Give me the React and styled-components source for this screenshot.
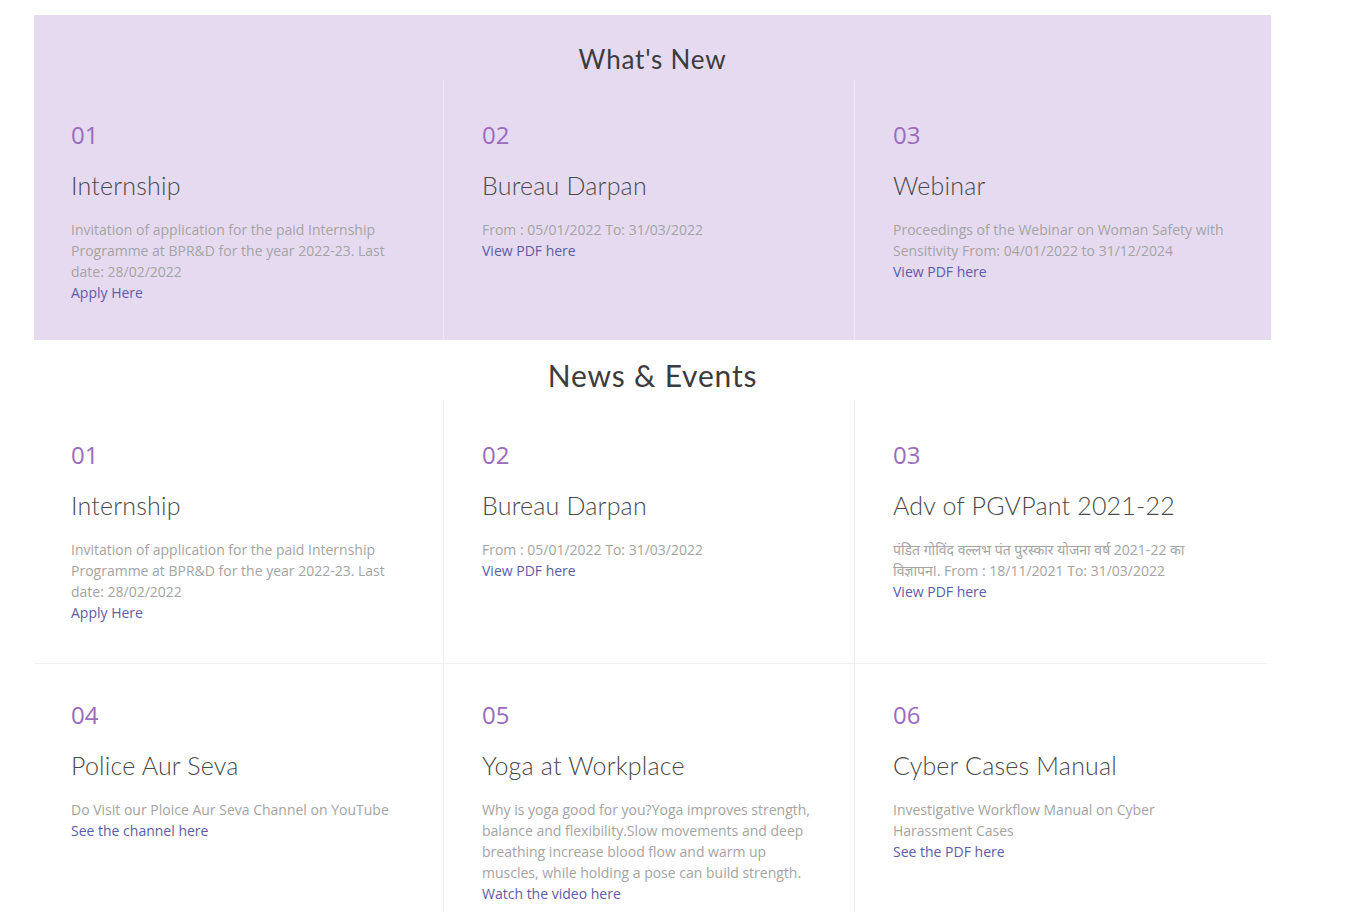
import React from "react";
import styled, { createGlobalStyle } from "styled-components";

const whatsNew = [
  {
    no: "01",
    title: "Internship",
    text: "Invitation of application for the paid Internship Programme at BPR&D for the year 2022-23. Last date: 28/02/2022",
    link: "Apply Here",
  },
  {
    no: "02",
    title: "Bureau Darpan",
    text: "From : 05/01/2022 To: 31/03/2022",
    link: "View PDF here",
  },
  {
    no: "03",
    title: "Webinar",
    text: "Proceedings of the Webinar on Woman Safety with Sensitivity From: 04/01/2022 to 31/12/2024",
    link: "View PDF here",
  },
];

const news = [
  whatsNew[0],
  whatsNew[1],
  {
    no: "03",
    title: "Adv of PGVPant 2021-22",
    text: "पंडित गोविंद वल्लभ पंत पुरस्कार योजना वर्ष 2021-22 का विज्ञापनI. From : 18/11/2021 To: 31/03/2022",
    link: "View PDF here",
  },
  {
    no: "04",
    title: "Police Aur Seva",
    text: "Do Visit our Ploice Aur Seva Channel on YouTube",
    link: "See the channel here",
  },
  {
    no: "05",
    title: "Yoga at Workplace",
    text: "Why is yoga good for you?Yoga improves strength, balance and flexibility.Slow movements and deep breathing increase blood flow and warm up muscles, while holding a pose can build strength.",
    link: "Watch the video here",
  },
  {
    no: "06",
    title: "Cyber Cases Manual",
    text: "Investigative Workflow Manual on Cyber Harassment Cases",
    link: "See the PDF here",
  },
];

const Global = createGlobalStyle`
  body {
    margin: 0;
    background: #fff;
    font-family: "Open Sans", "Noto Sans", sans-serif;
  }
`;

const Page = styled.div`
  width: 1237px;
  margin-left: 34px;
  padding-top: 15px;
`;

const Section = styled.section`
  background: ${(p) => (p.$tinted ? "#e6daf1" : "transparent")};
  padding-top: ${(p) => (p.$tinted ? "24px" : "15px")};
`;

const Heading = styled.h2`
  margin: 0 0 ${(p) => (p.$big ? "5px" : "1px")};
  text-align: center;
  font-family: Lato, "Noto Sans", sans-serif;
  font-weight: 400;
  font-size: ${(p) => (p.$big ? "30px" : "26px")};
  line-height: 40px;
  letter-spacing: 0.8px;
  color: #3c3c3c;
`;

const Grid = styled.div`
  display: grid;
  grid-template-columns: 409px 411px 1fr;
`;

const Card = styled.div`
  padding: ${(p) => (p.$rowTop ? "36px" : "40px")} 38px
    ${(p) => (p.$tinted ? "37px" : "40px")};
  padding-left: ${(p) => (p.$first ? "37px" : "38px")};
  border-left: ${(p) =>
    p.$first ? "none" : `1px solid ${p.$tinted ? "#efe8f6" : "#eeeeee"}`};
  border-top: ${(p) => (p.$rowTop ? "1px solid #eeeeee" : "none")};
  margin-right: ${(p) => (p.$last && !p.$tinted ? "4px" : "0")};
`;

const Num = styled.div`
  font-size: 24px;
  line-height: 30px;
  color: #9b6bbd;
`;

const Title = styled.h3`
  margin: 19px 0 18px;
  font-family: Lato, "Noto Sans", sans-serif;
  font-weight: 300;
  font-size: 25px;
  line-height: 32px;
  letter-spacing: 0.2px;
  color: #4a4a4a;
`;

const Text = styled.p`
  margin: 0;
  font-size: 14px;
  line-height: 21px;
  color: #a4a4a4;
`;

const More = styled.a`
  display: block;
  font-size: 14px;
  line-height: 21px;
  color: #5c5ca8;
  text-decoration: none;
`;

const CardItem = ({ item, index, tinted }) => (
  <Card
    $tinted={tinted}
    $first={index % 3 === 0}
    $last={index % 3 === 2}
    $rowTop={index >= 3}
  >
    <Num>{item.no}</Num>
    <Title>{item.title}</Title>
    <Text>{item.text}</Text>
    <More href="#">{item.link}</More>
  </Card>
);

export default function App() {
  return (
    <>
      <Global />
      <Page>
        <Section $tinted>
          <Heading>What's New</Heading>
          <Grid>
            {whatsNew.map((item, i) => (
              <CardItem key={i} item={item} index={i} tinted />
            ))}
          </Grid>
        </Section>
        <Section>
          <Heading $big>News &amp; Events</Heading>
          <Grid>
            {news.map((item, i) => (
              <CardItem key={i} item={item} index={i} />
            ))}
          </Grid>
        </Section>
      </Page>
    </>
  );
}
